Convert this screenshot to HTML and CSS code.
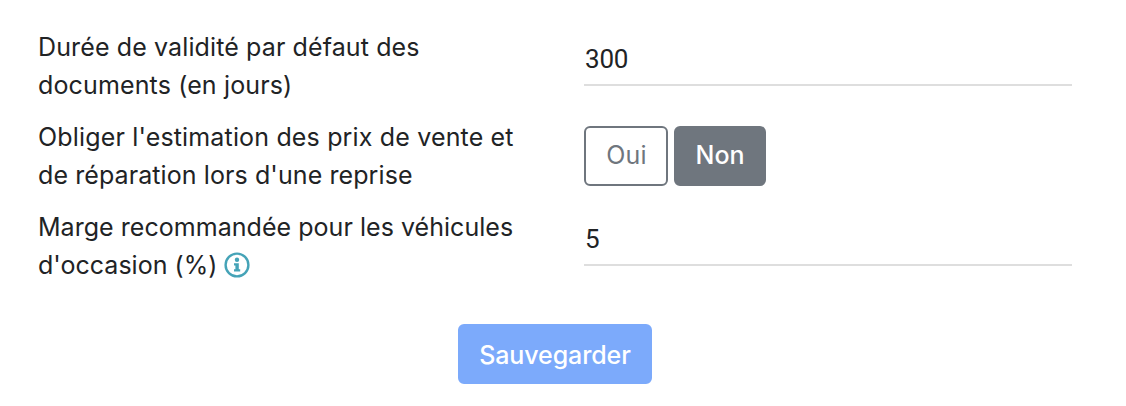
FILE: index.html
```html
<!DOCTYPE html>
<html lang="fr">
<head>
<meta charset="utf-8">
<title>Paramètres</title>
<link rel="stylesheet" href="styles.css">
</head>
<body>
<form class="settings">
  <div class="row">
    <label class="label" for="validity"><span class="line l1">Durée de validité par défaut des</span><span class="line l2">documents (en jours)</span></label>
    <input class="field" id="validity" type="text" value="300">
  </div>
  <div class="row">
    <div class="label"><span class="line l3">Obliger l'estimation des prix de vente et</span><span class="line l4">de réparation lors d'une reprise</span></div>
    <div class="choices">
      <button class="btn outline" type="button">Oui</button>
      <button class="btn solid" type="button">Non</button>
    </div>
  </div>
  <div class="row">
    <label class="label" for="margin"><span class="line l5">Marge recommandée pour les véhicules</span><span class="line l6">d'occasion (%)<svg class="info" viewBox="0 0 26 26" aria-hidden="true"><circle cx="13" cy="13" r="11.4"/><circle class="dot" cx="13" cy="7.8" r="2.2"/><path d="M10 11.2h4.8v6.1h1.4v2.3H10v-2.3h1.4v-3.8H10z"/></svg></span></label>
    <input class="field" id="margin" type="text" value="5">
  </div>
  <div class="actions"><button class="btn save" type="submit">Sauvegarder</button></div>
</form>
</body>
</html>
```
FILE: styles.css
```css
* { box-sizing: border-box; }
body { margin: 0; background: #fff; color: #212325; font: 25px/38px Inter, sans-serif; }
.settings { padding: 28px 54px 0 38px; }
.row { display: grid; grid-template-columns: 546px 488px; height: 90px; }
.label { display: block; }
.line { display: block; white-space: nowrap; }
.l1 { letter-spacing: 0.12px; }
.l2 { letter-spacing: 0.14px; }
.l3 { letter-spacing: 0.16px; }
.l4 { letter-spacing: 0.09px; }
.l5 { letter-spacing: 0.04px; }
.l6 { letter-spacing: 0.02px; }
.field { width: 488px; height: 58px; padding: 6px 1px 0; border: 0; border-bottom: 2px solid #dedede; border-radius: 0; outline: 0; background: transparent; color: #212325; font: 26px/38px Roboto, sans-serif; letter-spacing: -0.2px; }
.choices { display: flex; gap: 6px; padding-top: 8px; }
.btn { height: 60px; padding: 0; border: 2px solid #6f767e; border-radius: 6px; font: inherit; }
.outline { width: 84px; padding: 0 0 3px 1px; background: #fff; color: #6f767e; letter-spacing: 0.2px; }
.solid { width: 92px; padding-bottom: 3px; background: #6f767e; color: #fff; font-weight: 450; letter-spacing: 0; }
.info { width: 26px; height: 26px; margin-left: 7px; vertical-align: -4px; }
.info circle { fill: none; stroke: #45a3b7; stroke-width: 2.4; }
.info .dot { fill: #45a3b7; stroke: none; }
.info path { fill: #45a3b7; }
.actions { display: flex; padding: 26px 0 0 420px; }
.save { width: 194px; padding-top: 1px; background: #7caafb; border-color: #7caafb; color: #fff; font-weight: 450; letter-spacing: -0.1px; }
```
